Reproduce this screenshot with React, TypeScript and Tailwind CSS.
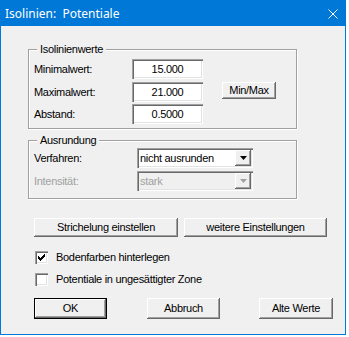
import React from 'react';

const raised =
  'bg-[#f0f0f0] shadow-[inset_-1px_-1px_0_#696969,inset_1px_1px_0_#ffffff,inset_-2px_-2px_0_#a0a0a0]';
const sunken =
  'shadow-[inset_1px_1px_0_#a0a0a0,inset_2px_2px_0_#696969,inset_-1px_-1px_0_#ffffff,inset_-2px_-2px_0_#e3e3e3]';

function GroupBox({
  title,
  className,
  children,
}: {
  title: string;
  className?: string;
  children: React.ReactNode;
}) {
  return (
    <div
      className={`relative w-[269px] border border-[#a0a0a0] shadow-[1px_1px_0_#ffffff,inset_1px_1px_0_#ffffff] ${className ?? ''}`}
    >
      <span className="absolute -top-[6px] left-[8px] bg-[#f0f0f0] px-[3px] leading-[11px]">{title}</span>
      {children}
    </div>
  );
}

function NumInput({ value }: { value: string }) {
  return (
    <div className={`flex h-[20px] w-[71px] items-center justify-center bg-white ${sunken}`}>
      {value}
    </div>
  );
}

function Combo({ value, disabled }: { value: string; disabled?: boolean }) {
  return (
    <div
      className={`flex h-[20px] w-[116px] p-[2px] ${sunken} ${disabled ? 'bg-[#f0f0f0] text-[#a0a0a0]' : 'bg-white'}`}
    >
      <span className="flex flex-1 items-center pl-[1px]">{value}</span>
      <span className={`flex w-[16px] items-center justify-center ${raised}`}>
        <svg width="7" height="4" viewBox="0 0 7 4">
          <polygon points="0,0 7,0 3.5,4" fill={disabled ? '#a0a0a0' : '#000'} />
        </svg>
      </span>
    </div>
  );
}

function Btn({ label, className }: { label: string; className?: string }) {
  return <div className={`flex items-center justify-center ${raised} ${className ?? ''}`}>{label}</div>;
}

function Check({ checked, label, className }: { checked?: boolean; label: string; className?: string }) {
  return (
    <div className={`flex items-center ${className ?? ''}`}>
      <div className={`relative h-[13px] w-[13px] bg-white ${sunken}`}>
        {checked && (
          <svg width="13" height="13" viewBox="0 0 13 13" shapeRendering="crispEdges" className="absolute left-0 top-0">
            {[5, 6, 7, 6, 5, 4, 3].map((y, i) => (
              <rect key={i} x={3 + i} y={y} width="1" height="3" fill="#000" />
            ))}
          </svg>
        )}
      </div>
      <span className="ml-[8px]">{label}</span>
    </div>
  );
}

export default function App() {
  return (
    <div className="h-[337px] w-[349px] bg-white">
      <div className="flex h-[335px] w-[346px] flex-col border border-[#0078d7] bg-[#f0f0f0] font-['Liberation_Sans',Arial,sans-serif] text-[11px] leading-[13px] tracking-[-0.3px] text-black">
        {/* Title bar */}
        <div className="flex h-[25px] shrink-0 items-center justify-between bg-[#0078d7] pl-[4px] pr-[7px] font-['Noto_Sans',sans-serif] text-[12px] tracking-normal text-white">
          <span>Isolinien:&nbsp; Potentiale</span>
          <svg width="10" height="10" viewBox="0 0 10 10">
            <path d="M0.5 0.5 L9.5 9.5 M9.5 0.5 L0.5 9.5" stroke="#fff" strokeWidth="1" />
          </svg>
        </div>

        {/* Body */}
        <div className="flex flex-col pl-[27px]">
          <GroupBox title="Isolinienwerte" className="mt-[23px] h-[80px]">
            <div className="flex flex-col pl-[5px]">
              <div className="mt-[9px] flex items-center">
                <span className="w-[98px]">Minimalwert:</span>
                <NumInput value="15.000" />
              </div>
              <div className="mt-[3px] flex items-center">
                <span className="w-[98px]">Maximalwert:</span>
                <NumInput value="21.000" />
                <Btn label="Min/Max" className="ml-[19px] h-[17px] w-[54px] self-start" />
              </div>
              <div className="mt-[2px] flex items-center">
                <span className="w-[98px]">Abstand:</span>
                <NumInput value="0.5000" />
              </div>
            </div>
          </GroupBox>

          <GroupBox title="Ausrundung" className="mt-[11px] h-[59px]">
            <div className="flex flex-col pl-[5px]">
              <div className="mt-[7px] flex items-center">
                <span className="w-[103px]">Verfahren:</span>
                <Combo value="nicht ausrunden" />
              </div>
              <div className="mt-[3px] flex items-center">
                <span className="w-[103px] text-[#a0a0a0]">Intensität:</span>
                <Combo value="stark" disabled />
              </div>
            </div>
          </GroupBox>

          <div className="ml-[6px] mt-[19px] flex">
            <Btn label="Strichelung einstellen" className="h-[19px] w-[144px]" />
            <Btn label="weitere Einstellungen" className="ml-[6px] h-[19px] w-[143px]" />
          </div>

          <Check checked label="Bodenfarben hinterlegen" className="ml-[7px] mt-[14px]" />
          <Check label="Potentiale in ungesättigter Zone" className="ml-[7px] mt-[9px]" />

          <div className="ml-[6px] mt-[12px] flex">
            <div className="h-[21px] w-[73px] border border-black">
              <Btn label="OK" className="h-full w-full" />
            </div>
            <Btn label="Abbruch" className="ml-[40px] h-[21px] w-[73px]" />
            <Btn label="Alte Werte" className="ml-[39px] h-[21px] w-[74px]" />
          </div>
        </div>
      </div>
    </div>
  );
}
